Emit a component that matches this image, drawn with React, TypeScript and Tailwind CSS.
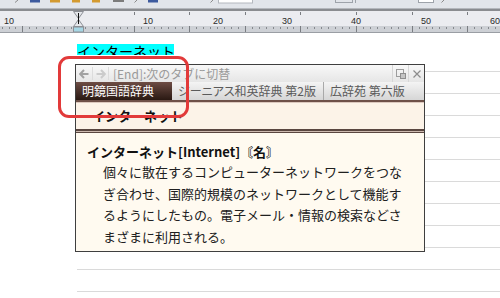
import React from "react";

const CJK = "font-['Noto_Sans_CJK_JP','Noto_Sans',sans-serif]";

function ToolbarStrip() {
  // tops of toolbar icons, cut off by the window edge
  return (
    <svg width="500" height="8" className="block">
      <path d="M18 0 L15 2.5" stroke="#8a8a8a" strokeWidth="1" fill="none" />
      <rect x="30" y="0" width="10" height="2.5" fill="#3d5a9e" />
      <rect x="50" y="0" width="10" height="2.5" fill="#d39a30" />
      <rect x="72" y="0" width="8" height="2.5" fill="#d39a30" />
      <rect x="92" y="0" width="8" height="2.5" fill="#d39a30" />
      <rect x="113" y="0" width="11" height="2" fill="#7c7c7c" />
      <path d="M137 0 L134.5 2.5" stroke="#8a8a8a" strokeWidth="1" fill="none" />
      <rect x="148" y="0" width="10" height="2.5" fill="#3d5a9e" />
      <path d="M213 0 L210.5 2.5" stroke="#8a8a8a" strokeWidth="1" fill="none" />
      <rect x="218.5" y="-1" width="34" height="4" fill="#ffffff" stroke="#b4b8be" />
      <rect x="335.5" y="-1" width="17" height="3.5" fill="none" stroke="#9ea3aa" />
      <line x1="355.5" y1="0" x2="355.5" y2="3" stroke="#9ea3aa" />
      <rect x="418.5" y="-1" width="15" height="3.5" fill="#ffffff" stroke="#9ea3aa" />
      <path d="M444 0 L441.5 2.5" stroke="#8a8a8a" strokeWidth="1" fill="none" />
    </svg>
  );
}

function Ruler() {
  const origin = 78;
  const step = 6.95;
  const ticks: React.ReactNode[] = [];
  for (let k = -11; k <= 61; k++) {
    const x = Math.round(origin + k * step) + 0.5;
    if (k === 0) continue;
    if (k % 8 === 0) {
      ticks.push(<line key={"b" + k} x1={x} y1={15} x2={x} y2={21} stroke="#7a7d82" />);
      if (k > 0) ticks.push(<line key={"t" + k} x1={x} y1={1} x2={x} y2={4} stroke="#7a7d82" />);
    } else {
      ticks.push(<line key={"s" + k} x1={x} y1={16} x2={x} y2={18} stroke="#85888d" />);
    }
  }
  const nums = [
    { x: 9, t: "10" },
    { x: 148, t: "10" },
    { x: 218, t: "20" },
    { x: 287, t: "30" },
    { x: 356, t: "40" },
    { x: 426, t: "50" },
    { x: 495, t: "60" },
  ];
  return (
    <svg width="500" height="21" className="block">
      <rect x="0" y="15" width="500" height="6" fill="#cdd0d5" />
      {ticks}
      {nums.map((n, i) => (
        <text
          key={i}
          x={n.x}
          y="13"
          textAnchor="middle"
          fontSize="9"
          fill="#2a2a2a"
          fontFamily="Liberation Sans, sans-serif"
        >
          {n.t}
        </text>
      ))}
      {/* indent marker */}
      <path d="M73.5 0.5 H83.5 L78.5 7.5 Z" fill="#e4e6ea" stroke="#8d9096" />
      <path d="M78.5 8.5 L73.5 15.5 H83.5 Z" fill="#e4e6ea" stroke="#8d9096" />
      <rect x="73.5" y="16" width="10" height="5" fill="#a6d6e4" stroke="#8d9096" />
      <line x1="78.5" y1="2" x2="78.5" y2="13" stroke="#111" />
    </svg>
  );
}

function ArrowLeftIcon({ color }: { color: string }) {
  return (
    <svg width="10" height="10" viewBox="0 0 10 10" className="block">
      <path d="M5 1 L1.2 5 L5 9 M1.5 5 H9.5" stroke={color} strokeWidth="2" fill="none" />
    </svg>
  );
}

function ArrowRightIcon({ color }: { color: string }) {
  return (
    <svg width="10" height="10" viewBox="0 0 10 10" className="block">
      <path d="M5 1 L8.8 5 L5 9 M8.5 5 H0.5" stroke={color} strokeWidth="2" fill="none" />
    </svg>
  );
}

function DictPopup() {
  return (
    <div className="absolute left-[75px] top-[64px] w-[350px] h-[188px] border border-[#3f3f3f] flex flex-col bg-[#fffaf0]">
      {/* title bar */}
      <div className="h-[17px] flex items-center bg-linear-to-b from-[#f8f8f8] to-[#e6e6e6]">
        <div className="pl-[3px]">
          <ArrowLeftIcon color="#a2a2a2" />
        </div>
        <div className="ml-[3px] w-px h-[13px] bg-[#dcdcdc]" />
        <div className="ml-[3px]">
          <ArrowRightIcon color="#cbcbcb" />
        </div>
        <div className="ml-[2px] w-px h-[13px] bg-[#dcdcdc]" />
        <span className="ml-[4px] text-[12px] leading-[17px] text-[#9a9a9a] whitespace-nowrap">
          [End]:次のタブに切替
        </span>
        <div className="ml-auto flex h-full">
          <div className="w-[16px] h-full border-l border-[#d6d6d6] flex items-center justify-center">
            <svg width="10" height="10" viewBox="0 0 10 10" className="block">
              <rect x="0.5" y="0.5" width="7" height="7" fill="none" stroke="#9c9c9c" />
              <rect x="4.5" y="4.5" width="5" height="5" fill="#c4c4c4" stroke="#8e8e8e" />
            </svg>
          </div>
          <div className="w-[16px] h-full border-l border-[#d6d6d6] flex items-center justify-center">
            <svg width="8" height="8" viewBox="0 0 8 8" className="block">
              <path d="M0.5 0.5 L7.5 7.5 M7.5 0.5 L0.5 7.5" stroke="#8c8c8c" strokeWidth="1.2" />
            </svg>
          </div>
        </div>
      </div>

      {/* tabs */}
      <div className="h-[18px] flex text-[12px] leading-[18px] whitespace-nowrap [font-feature-settings:'palt']">
        <div className="w-[96px] pl-[6px] text-white bg-linear-to-b from-[#6e4d45] to-[#2a1913]">
          明鏡国語辞典
        </div>
        <div className="w-[152px] pl-[6px] text-[#5a5a5a] border-r border-[#a9a9a9] bg-linear-to-b from-[#f4f4f4] to-[#d6d6d6]">
          ジーニアス和英辞典 第2版
        </div>
        <div className="flex-1 pl-[6px] text-[#5a5a5a] bg-linear-to-b from-[#f4f4f4] to-[#d6d6d6]">
          広辞苑 第六版
        </div>
      </div>
      <div className="h-[2px] bg-[#6e5048]" />
      <div className="h-px bg-[#dcc8be]" />

      {/* headword */}
      <div className="h-[26px] flex items-center pl-[16px] bg-[#fcf3e8] text-[13px] font-bold text-[#111]">
        インターネット
      </div>
      <div className="h-[4px] border-t-2 border-b border-[#5a4640] bg-[#cdbab0]" />

      {/* entry */}
      <div className="flex-1 pl-[11px] pt-[10px] text-[#202020]">
        <div className="text-[13px] leading-[18px] font-bold text-[#111] whitespace-nowrap">
          インターネット[Internet]〘名〙
        </div>
        <div className="pl-[16px] text-[13px] leading-[21.7px] whitespace-nowrap">
          <div>個々に散在するコンピューターネットワークをつな</div>
          <div>ぎ合わせ、国際的規模のネットワークとして機能す</div>
          <div>るようにしたもの。電子メール・情報の検索などさ</div>
          <div>まざまに利用される。</div>
        </div>
      </div>
    </div>
  );
}

export default function App() {
  return (
    <div className={`relative w-[500px] h-[298px] overflow-hidden bg-white ${CJK}`}>
      <div className="h-[8px] bg-[#e2e5ea]">
        <ToolbarStrip />
      </div>
      <div className="h-[3px] border-t border-[#b4b7bc] bg-[#8a8c90]" />
      <div className="h-[22px] bg-[#ebecf0] border-b border-[#9a9ea4]">
        <Ruler />
      </div>

      {/* document lines */}
      <div className="pl-[77px]">
        <div className="h-[28px] border-b border-[#dadada]">
          <div className="mt-[11px] w-[97px] h-[11px] overflow-hidden bg-[#00ffff] text-[14px] leading-[14px] text-black whitespace-nowrap">
            インターネット
          </div>
        </div>
        {Array.from({ length: 10 }).map((_, i) => (
          <div key={i} className="h-[22px] border-b border-[#dadada]" />
        ))}
      </div>

      <DictPopup />

      {/* highlight ring */}
      <div className="absolute left-[58px] top-[56px] w-[131px] h-[62px] border-[3px] border-[#e23a3a] rounded-[11px]" />
    </div>
  );
}
